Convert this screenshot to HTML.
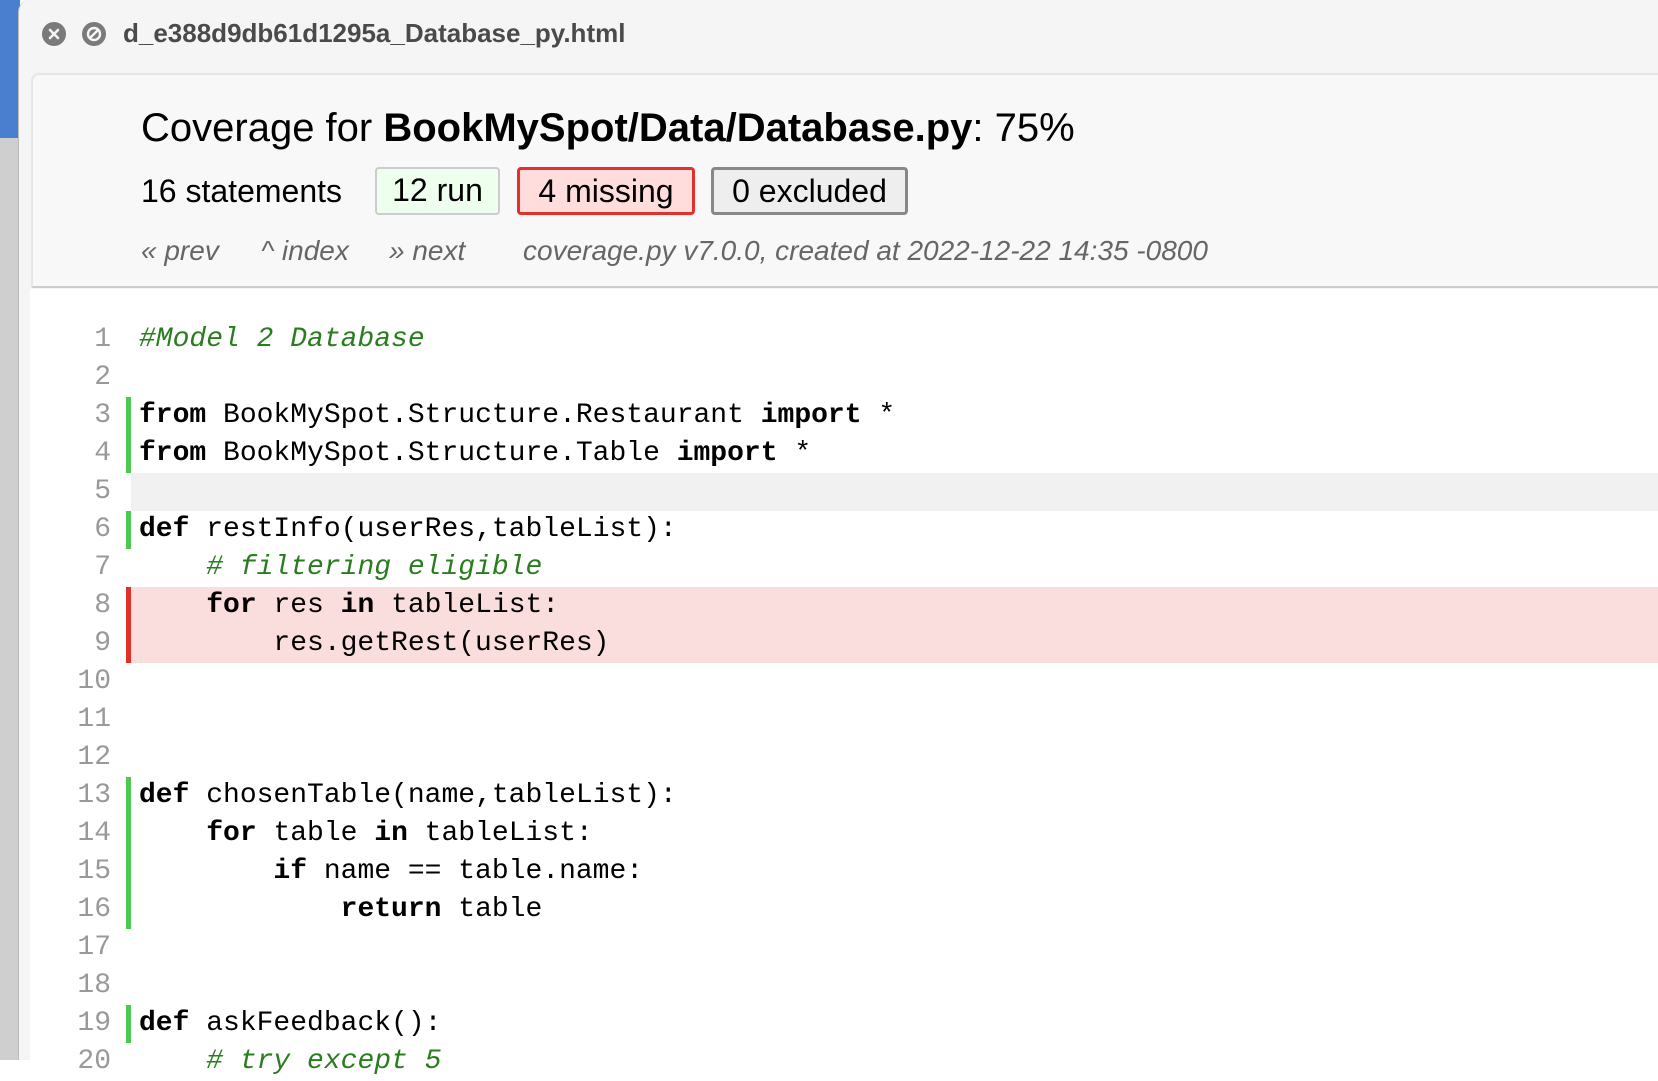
<!DOCTYPE html>
<html><head><meta charset="utf-8"><style>
*{margin:0;padding:0;box-sizing:border-box}
html,body{width:1658px;height:1060px;overflow:hidden;background:#fff;font-family:"Liberation Sans",sans-serif}
.strip{position:absolute;left:0;top:0;width:20px;height:1060px;background:#cfcfcf}
.strip .blue{position:absolute;left:0;top:0;width:20px;height:138px;background:#4a7fd0}
.win{position:absolute;left:18px;top:0;width:1660px;height:1060px;background:#f5f5f5;border-top-left-radius:12px;border-left:1px solid #bbb}
.tb{position:absolute;left:104px;top:18px;font-size:26px;font-weight:bold;color:#4a4a4a}
.ic{position:absolute;top:22px;width:24px;height:24px}
.hdr{position:absolute;left:12px;top:73px;width:1640px;height:215px;background:#f8f8f8;border-top:2px solid #e6e6e6;border-left:2px solid #e6e6e6;border-bottom:2px solid #ccc;border-top-left-radius:8px}
.title{position:absolute;left:141px;top:106px;font-size:40px;color:#000;white-space:nowrap}
.stat{position:absolute;top:173px;font-size:32px;color:#000;white-space:nowrap}
.box{position:absolute;top:167px;height:48px;border-radius:4px;font-size:32px;line-height:42px;text-align:center}
.nav{position:absolute;top:235px;font-size:28px;font-style:italic;color:#666;white-space:nowrap}
.code{position:absolute;left:30px;top:289px;width:1640px;height:771px;background:#fff}
.ln{position:absolute;left:0;width:1640px;height:38px;font-family:"Liberation Mono",monospace;font-size:28px;line-height:38px}
.ln .n{position:absolute;left:10px;width:71px;text-align:right;color:#999}
.ln .t{position:absolute;left:109px;white-space:pre;color:#000}
.ln .bar{position:absolute;left:96px;top:0;width:5px;height:38px}
.run .bar{background:#4ec84e}
.mis{background:#fadddd}.mis .bar{background:#e0302a}
b{font-weight:bold}
.ln .c{color:#2a7d1f;font-style:italic}
</style></head><body>
<div class="strip"><div class="blue"></div></div>
<div class="win">
<svg class="ic" style="left:23px" viewBox="0 0 24 24"><circle cx="12" cy="12" r="12" fill="#7a7a7a"/><path d="M8 8L16 16M16 8L8 16" stroke="#f5f5f5" stroke-width="2.6" stroke-linecap="round"/></svg>
<svg class="ic" style="left:63px" viewBox="0 0 24 24"><circle cx="12" cy="12" r="12" fill="#7a7a7a"/><circle cx="12" cy="12" r="6" fill="none" stroke="#f5f5f5" stroke-width="2.4"/><path d="M16 8L8 16" stroke="#f5f5f5" stroke-width="2.4"/></svg>
<div class="tb">d_e388d9db61d1295a_Database_py.html</div>
<div class="hdr"></div>
</div>
<div class="title">Coverage for <b>BookMySpot/Data/Database.py</b>: 75%</div>
<div class="stat" style="left:141px">16 statements</div>
<div class="box" style="left:375px;width:125px;background:#efe;border:2px solid #ccc">12 run</div>
<div class="box" style="left:517px;width:178px;background:#fdd;border:3px solid #e3302a">4 missing</div>
<div class="box" style="left:711px;width:197px;background:#eee;border:3px solid #888">0 excluded</div>
<div class="nav" style="left:141px">« prev</div>
<div class="nav" style="left:261px">^ index</div>
<div class="nav" style="left:389px">» next</div>
<div class="nav" style="left:523px">coverage.py v7.0.0, created at 2022-12-22 14:35 -0800</div>
<div class="code">
<div class="ln" style="top:32px"><span class="n">1</span><span class="t c">#Model 2 Database</span></div>
<div class="ln" style="top:70px"><span class="n">2</span></div>
<div class="ln run" style="top:108px"><span class="bar"></span><span class="n">3</span><span class="t"><b>from</b> BookMySpot.Structure.Restaurant <b>import</b> *</span></div>
<div class="ln run" style="top:146px"><span class="bar"></span><span class="n">4</span><span class="t"><b>from</b> BookMySpot.Structure.Table <b>import</b> *</span></div>
<div class="ln" style="top:184px"><span style="position:absolute;left:101px;right:0;top:0;bottom:0;background:#f1f1f1"></span><span class="n">5</span></div>
<div class="ln run" style="top:222px"><span class="bar"></span><span class="n">6</span><span class="t"><b>def</b> restInfo(userRes,tableList):</span></div>
<div class="ln" style="top:260px"><span class="n">7</span><span class="t">    <span class="c"># filtering eligible</span></span></div>
<div class="ln mis" style="top:298px;left:96px;width:1544px"><span class="bar" style="left:0"></span><span class="n" style="left:-86px">8</span><span class="t" style="left:13px">    <b>for</b> res <b>in</b> tableList:</span></div>
<div class="ln mis" style="top:336px;left:96px;width:1544px"><span class="bar" style="left:0"></span><span class="n" style="left:-86px">9</span><span class="t" style="left:13px">        res.getRest(userRes)</span></div>
<div class="ln" style="top:374px"><span class="n">10</span></div>
<div class="ln" style="top:412px"><span class="n">11</span></div>
<div class="ln" style="top:450px"><span class="n">12</span></div>
<div class="ln run" style="top:488px"><span class="bar"></span><span class="n">13</span><span class="t"><b>def</b> chosenTable(name,tableList):</span></div>
<div class="ln run" style="top:526px"><span class="bar"></span><span class="n">14</span><span class="t">    <b>for</b> table <b>in</b> tableList:</span></div>
<div class="ln run" style="top:564px"><span class="bar"></span><span class="n">15</span><span class="t">        <b>if</b> name == table.name:</span></div>
<div class="ln run" style="top:602px"><span class="bar"></span><span class="n">16</span><span class="t">            <b>return</b> table</span></div>
<div class="ln" style="top:640px"><span class="n">17</span></div>
<div class="ln" style="top:678px"><span class="n">18</span></div>
<div class="ln run" style="top:716px"><span class="bar"></span><span class="n">19</span><span class="t"><b>def</b> askFeedback():</span></div>
<div class="ln" style="top:754px"><span class="n">20</span><span class="t">    <span class="c"># try except 5</span></span></div>
</div>
</body></html>
